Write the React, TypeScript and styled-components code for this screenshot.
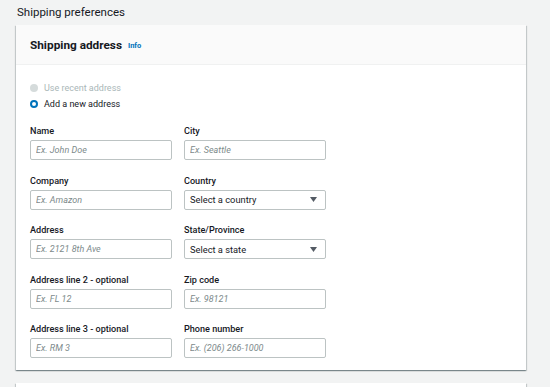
import React from 'react';
import styled, { createGlobalStyle } from 'styled-components';

const GlobalStyle = createGlobalStyle`
  html, body {
    margin: 0;
    padding: 0;
    background: #f2f3f3;
  }
  body {
    font-family: Roboto, "Liberation Sans", Arial, sans-serif;
    color: #16191f;
  }
`;

const Page = styled.div`
  padding: 0 24px 0 16px;
`;

const PageTitle = styled.h2`
  margin: 0;
  height: 25px;
  line-height: 25px;
  padding-left: 1px;
  font-size: 11.5px;
  font-weight: 400;
  color: #16191f;
`;

const Panel = styled.section<{ stub?: boolean }>`
  background: #ffffff;
  min-height: ${p => (p.stub ? '40px' : 'auto')};
  box-shadow: 0 1px 1px 0 rgba(0, 28, 36, 0.3), 1px 1px 1px 0 rgba(0, 28, 36, 0.15),
    -1px 1px 1px 0 rgba(0, 28, 36, 0.15);
  & + & {
    margin-top: 13px;
  }
`;

const PanelHeader = styled.header`
  display: flex;
  align-items: center;
  gap: 6px;
  height: 40px;
  padding: 0 14px;
  background: #fafafa;
  border-bottom: 1px solid #f0f1f1;
  box-sizing: border-box;
`;

const PanelTitle = styled.h3`
  margin: 0;
  font-size: 11.8px;
  font-weight: 700;
  color: #16191f;
`;

const InfoLink = styled.a`
  font-size: 7.5px;
  font-weight: 700;
  color: #0073bb;
  text-decoration: none;
  margin-top: 2px;
`;

const PanelBody = styled.div`
  padding: 15px 14px 12px;
`;

const RadioGroup = styled.div`
  display: flex;
  flex-direction: column;
  margin-bottom: 12px;
`;

const RadioRow = styled.label<{ disabled?: boolean }>`
  display: flex;
  align-items: center;
  gap: 6px;
  height: 16px;
  font-size: 9px;
  color: ${p => (p.disabled ? '#aab7b8' : '#16191f')};
`;

const RadioDot = styled.span<{ checked?: boolean; disabled?: boolean }>`
  width: 8px;
  height: 8px;
  border-radius: 50%;
  box-sizing: border-box;
  background: ${p => (p.disabled ? '#d5dbdb' : '#ffffff')};
  border: ${p => (p.checked ? '2.5px solid #0073bb' : p.disabled ? 'none' : '1px solid #879596')};
`;

const FormGrid = styled.div`
  display: grid;
  grid-template-columns: 142px 142px;
  column-gap: 12px;
  row-gap: 13.6px;
`;

const Field = styled.div`
  display: flex;
  flex-direction: column;
  gap: 2px;
`;

const Label = styled.label`
  font-size: 9.1px;
  line-height: 14px;
  font-weight: 500;
  color: #16191f;
`;

const Input = styled.input`
  height: 20px;
  box-sizing: border-box;
  border: 1px solid #bcc3c3;
  border-radius: 2px;
  padding: 0 5px;
  font-family: inherit;
  font-size: 9px;
  color: #16191f;
  background: #ffffff;

  &::placeholder {
    color: #7d8a8b;
    font-style: italic;
  }

  &:focus {
    outline: none;
  }
`;

const SelectBox = styled.div`
  height: 20px;
  box-sizing: border-box;
  border: 1px solid #bcc3c3;
  border-radius: 2px;
  padding: 0 8px 0 5px;
  display: flex;
  align-items: center;
  justify-content: space-between;
  font-size: 9.3px;
  color: #16191f;
  background: #ffffff;
`;

const Caret = () => (
  <svg width="7" height="5" viewBox="0 0 7 5">
    <polygon points="0,0 7,0 3.5,5" fill="#545b64" />
  </svg>
);

type FieldDef = { label: string; placeholder?: string; select?: string };

const fields: FieldDef[] = [
  { label: 'Name', placeholder: 'Ex. John Doe' },
  { label: 'City', placeholder: 'Ex. Seattle' },
  { label: 'Company', placeholder: 'Ex. Amazon' },
  { label: 'Country', select: 'Select a country' },
  { label: 'Address', placeholder: 'Ex. 2121 8th Ave' },
  { label: 'State/Province', select: 'Select a state' },
  { label: 'Address line 2 - optional', placeholder: 'Ex. FL 12' },
  { label: 'Zip code', placeholder: 'Ex. 98121' },
  { label: 'Address line 3 - optional', placeholder: 'Ex. RM 3' },
  { label: 'Phone number', placeholder: 'Ex. (206) 266-1000' },
];

const App: React.FC = () => {
  return (
    <Page>
      <GlobalStyle />
      <PageTitle>Shipping preferences</PageTitle>
      <Panel>
        <PanelHeader>
          <PanelTitle>Shipping address</PanelTitle>
          <InfoLink href="#">Info</InfoLink>
        </PanelHeader>
        <PanelBody>
          <RadioGroup>
            <RadioRow disabled>
              <RadioDot disabled />
              Use recent address
            </RadioRow>
            <RadioRow>
              <RadioDot checked />
              Add a new address
            </RadioRow>
          </RadioGroup>
          <FormGrid>
            {fields.map(f => (
              <Field key={f.label}>
                <Label>{f.label}</Label>
                {f.select ? (
                  <SelectBox>
                    {f.select}
                    <Caret />
                  </SelectBox>
                ) : (
                  <Input placeholder={f.placeholder} />
                )}
              </Field>
            ))}
          </FormGrid>
        </PanelBody>
      </Panel>
      <Panel stub />
    </Page>
  );
};

export default App;
